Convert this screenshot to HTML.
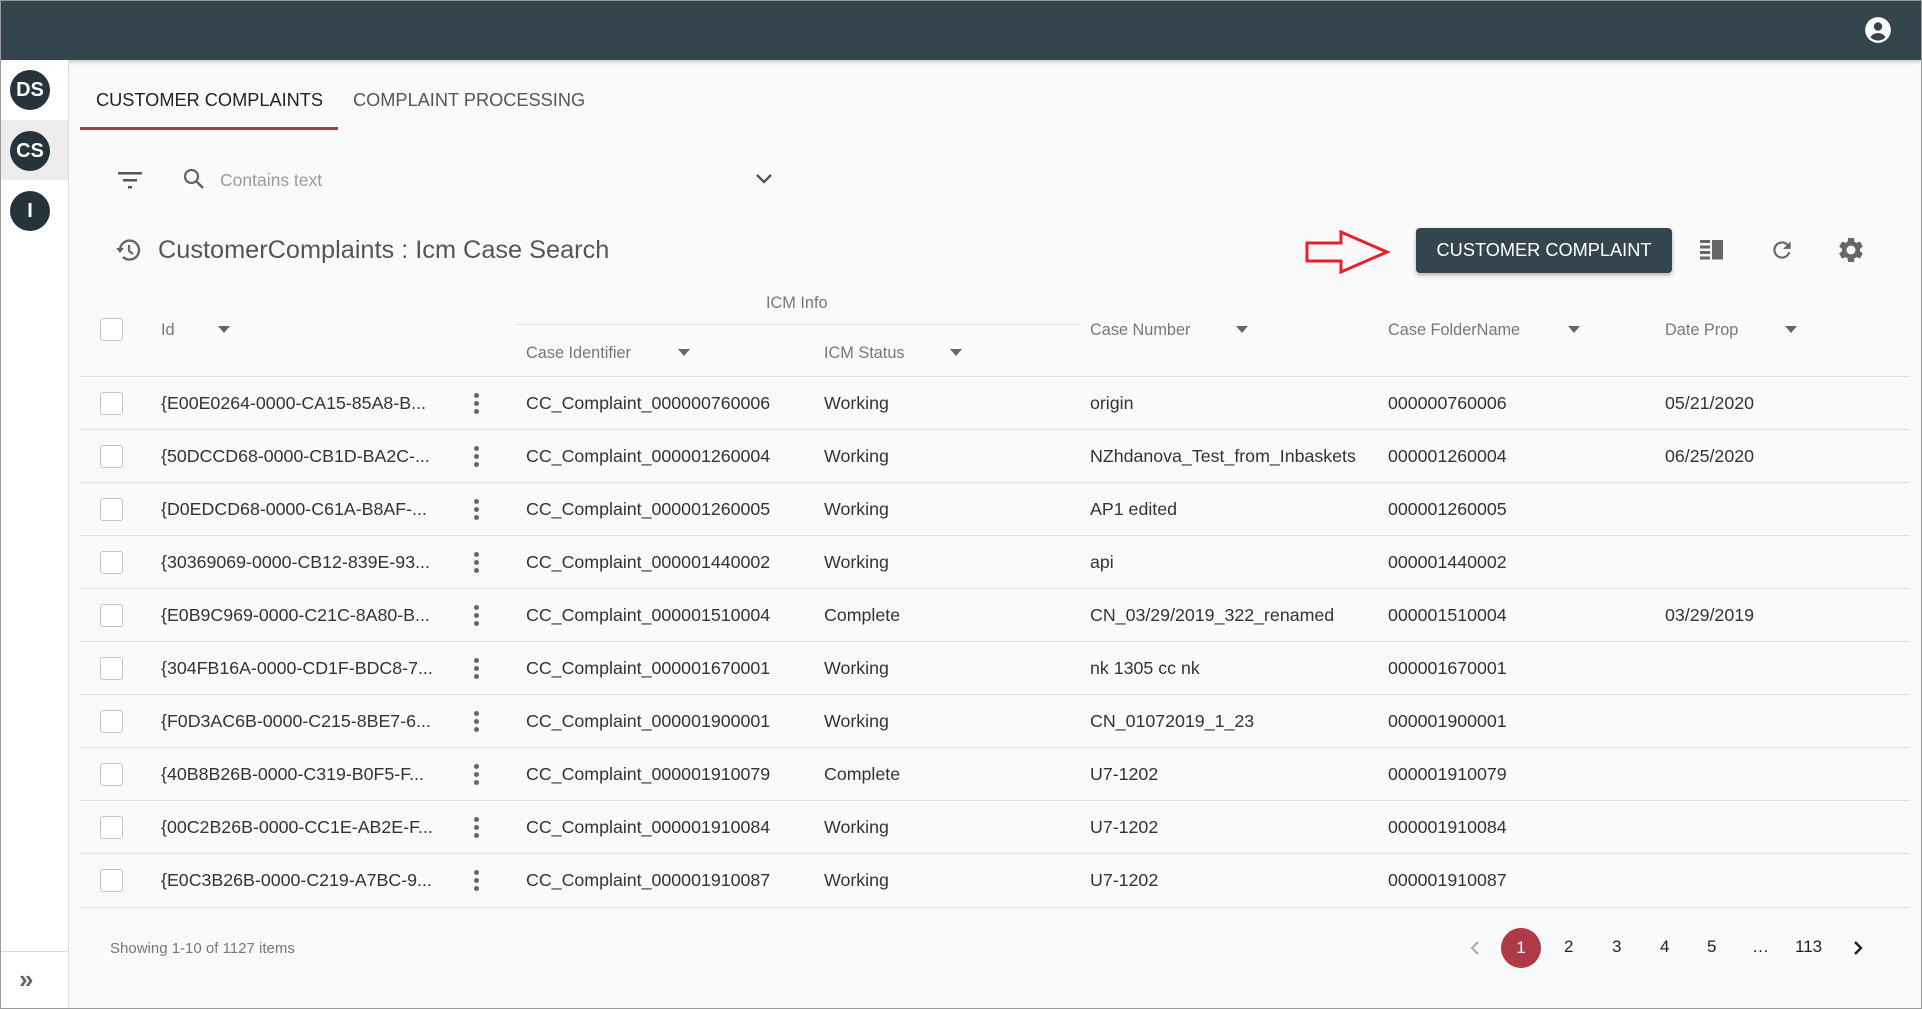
<!DOCTYPE html>
<html><head><meta charset="utf-8"><style>
*{margin:0;padding:0;box-sizing:border-box}
body{width:1922px;height:1009px;overflow:hidden;background:#fafafa;font-family:"Liberation Sans",Arial,sans-serif;position:relative;color:#333}
.a{position:absolute;white-space:nowrap}
.frame{position:absolute;left:0;top:0;width:1922px;height:1009px;border:1px solid #9a9a9a;pointer-events:none;z-index:10}
.hdr{position:absolute;left:0;top:0;width:1922px;height:60px;background:#35454e;box-shadow:0 2px 4px rgba(0,0,0,.2)}
.side{position:absolute;left:0;top:60px;width:69px;height:949px;background:#fff;border-right:1px solid #dcdcdc}
.av{position:absolute;left:10px;width:40px;height:40px;border-radius:50%;background:#26333b;color:#fff;font-weight:bold;font-size:20px;text-align:center;line-height:40px}
.cb{position:absolute;left:100px;width:23px;height:23px;border:1.5px solid #c4c4c4;border-radius:3px;background:#fff}
.hd{position:absolute;color:#777;font-size:16.3px}
.tri{position:absolute;width:0;height:0;border-left:6px solid transparent;border-right:6px solid transparent;border-top:7px solid #666}
.line{position:absolute;height:1px;background:#e0e0e0}
.c{position:absolute;font-size:17.8px;color:#333;white-space:nowrap;margin-top:1px}
.keb{position:absolute;left:474px;width:5px}
.keb i{display:block;width:5px;height:5px;border-radius:50%;background:#666;margin-bottom:3px}
.pg{position:absolute;top:937px;font-size:17px;color:#222}
</style></head><body>
<div class="hdr"></div>
<svg class="a" style="left:1864px;top:16px" width="28" height="28" viewBox="0 0 24 24"><circle cx="12" cy="12" r="11" fill="#fff"/><circle cx="12" cy="9" r="3.6" fill="#35454e"/><path d="M5.5 18.2c1.4-2.4 3.9-3.6 6.5-3.6s5.1 1.2 6.5 3.6c-1.7 1.8-4 2.8-6.5 2.8s-4.8-1-6.5-2.8z" fill="#35454e"/></svg>

<div class="side">
<div style="position:absolute;left:0;top:60px;width:68px;height:60px;background:#ececec"></div>
<div class="av" style="top:10px">DS</div>
<div class="av" style="top:71px">CS</div>
<div class="av" style="top:131px">I</div>
<div style="position:absolute;left:0;top:891px;width:68px;height:1px;background:#dcdcdc"></div>
<div class="a" style="left:19px;top:904px;font-size:26px;color:#666;font-weight:bold;letter-spacing:-4px">»</div>
</div>

<div class="a" style="left:96px;top:90px;font-size:18.2px;color:#222">CUSTOMER COMPLAINTS</div>
<div class="a" style="left:353px;top:90px;font-size:18.2px;color:#555">COMPLAINT PROCESSING</div>
<div class="a" style="left:80px;top:127px;width:258px;height:3px;background:#ae3a42"></div>

<svg class="a" style="left:117px;top:170px" width="26" height="20" viewBox="0 0 26 20"><rect x="1" y="2" width="24" height="2.5" fill="#555"/><rect x="6" y="9" width="14" height="2.5" fill="#555"/><rect x="11" y="16" width="4" height="2.5" fill="#555"/></svg>
<svg class="a" style="left:182px;top:167px" width="24" height="24" viewBox="0 0 24 24"><circle cx="9.5" cy="9.5" r="6.5" fill="none" stroke="#666" stroke-width="2.3"/><path d="M14 14l7 7" stroke="#666" stroke-width="2.6"/></svg>
<div class="a" style="left:220px;top:170px;font-size:17.5px;color:#999">Contains text</div>
<svg class="a" style="left:755px;top:172px" width="18" height="14" viewBox="0 0 18 14"><path d="M2 3l7 7 7-7" fill="none" stroke="#555" stroke-width="2.3"/></svg>

<svg class="a" style="left:115px;top:237px" width="28" height="26" viewBox="0 0 28 26"><path d="M5 13a9.5 9.5 0 1 1 3 7" fill="none" stroke="#666" stroke-width="2.4"/><path d="M1 11l4 5 4-5z" fill="#666"/><path d="M14 8v6l4 3" fill="none" stroke="#666" stroke-width="2.2"/></svg>
<div class="a" style="left:158px;top:236px;font-size:25.3px;color:#555">CustomerComplaints : Icm Case Search</div>

<svg class="a" style="left:1304px;top:229px" width="88" height="46" viewBox="0 0 88 46"><path d="M3 14h34V3l46 20-46 20V32H3z" fill="none" stroke="#e8202a" stroke-width="3"/></svg>
<div class="a" style="left:1416px;top:228px;width:256px;height:45px;background:#35454e;border-radius:4px;color:#fff;font-size:18.2px;text-align:center;line-height:45px;box-shadow:0 2px 4px rgba(0,0,0,.3)">CUSTOMER COMPLAINT</div>
<svg class="a" style="left:1700px;top:240px" width="24" height="20" viewBox="0 0 24 20"><rect x="0" y="0" width="10" height="3" fill="#666"/><rect x="0" y="5.5" width="10" height="3" fill="#666"/><rect x="0" y="11" width="10" height="3" fill="#666"/><rect x="0" y="16.5" width="10" height="3" fill="#666"/><rect x="12" y="0" width="11" height="19.5" fill="#666"/></svg>
<svg class="a" style="left:1769px;top:237px" width="26" height="26" viewBox="0 0 24 24"><path d="M17.65 6.35A7.96 7.96 0 0 0 12 4a8 8 0 1 0 7.730 10h-2.08A6 6 0 1 1 12 6c1.66 0 3.140.69 4.220 1.78L13 11h7V4l-2.350 2.350z" fill="#666"/></svg>
<svg class="a" style="left:1836px;top:235px" width="30" height="30" viewBox="0 0 24 24"><path d="M19.14 12.94c.04-.3.06-.61.06-.94s-.02-.64-.07-.94l2.03-1.58a.5.5 0 0 0 .12-.61l-1.92-3.32a.5.5 0 0 0-.59-.22l-2.39.96a7 7 0 0 0-1.620-.94l-.36-2.54a.48.48 0 0 0-.48-.41h-3.84a.48.48 0 0 0-.47.41l-.36 2.54c-.59.24-1.13.57-1.62.94l-2.39-.96a.49.49 0 0 0-.59.22L2.74 8.87a.49.49 0 0 0 .12.61l2.03 1.58c-.05.3-.09.63-.09.94s.02.64.07.94l-2.03 1.58a.5.5 0 0 0-.12.61l1.92 3.32c.12.22.37.29.59.22l2.39-.96c.5.38 1.03.7 1.62.94l.36 2.54c.05.24.24.41.48.41h3.84c.24 0 .44-.17.47-.41l.36-2.54c.59-.24 1.13-.56 1.62-.94l2.39.96c.22.08.47 0 .59-.22l1.92-3.32a.48.48 0 0 0-.12-.61l-2.01-1.58zM12 15.6A3.6 3.6 0 1 1 12 8.4a3.6 3.6 0 0 1 0 7.2z" fill="#666"/></svg>

<div class="hd" style="left:766px;top:294px">ICM Info</div>
<div class="line" style="left:516px;top:324px;width:563px"></div>
<div class="cb" style="top:318px"></div>
<div class="hd" style="left:161px;top:321px">Id</div><div class="tri" style="left:218px;top:326px"></div>
<div class="hd" style="left:526px;top:344px">Case Identifier</div><div class="tri" style="left:678px;top:349px"></div>
<div class="hd" style="left:824px;top:344px">ICM Status</div><div class="tri" style="left:950px;top:349px"></div>
<div class="hd" style="left:1090px;top:321px">Case Number</div><div class="tri" style="left:1236px;top:326px"></div>
<div class="hd" style="left:1388px;top:321px">Case FolderName</div><div class="tri" style="left:1568px;top:326px"></div>
<div class="hd" style="left:1665px;top:321px">Date Prop</div><div class="tri" style="left:1785px;top:326px"></div>
<div class="line" style="left:80px;top:376px;width:1830px"></div>

<div style="position:absolute;left:0;top:0">
<div class="cb" style="top:392px"></div><div class="c" style="left:161px;top:392px">{E00E0264-0000-CA15-85A8-B...</div><div class="keb" style="top:393px"><i></i><i></i><i></i></div><div class="c" style="left:526px;top:392px">CC_Complaint_000000760006</div><div class="c" style="left:824px;top:392px">Working</div><div class="c" style="left:1090px;top:392px">origin</div><div class="c" style="left:1388px;top:392px">000000760006</div><div class="c" style="left:1665px;top:392px">05/21/2020</div><div class="line" style="left:80px;top:429px;width:1830px"></div>

<div class="cb" style="top:445px"></div><div class="c" style="left:161px;top:445px">{50DCCD68-0000-CB1D-BA2C-...</div><div class="keb" style="top:446px"><i></i><i></i><i></i></div><div class="c" style="left:526px;top:445px">CC_Complaint_000001260004</div><div class="c" style="left:824px;top:445px">Working</div><div class="c" style="left:1090px;top:445px">NZhdanova_Test_from_Inbaskets</div><div class="c" style="left:1388px;top:445px">000001260004</div><div class="c" style="left:1665px;top:445px">06/25/2020</div><div class="line" style="left:80px;top:482px;width:1830px"></div>

<div class="cb" style="top:498px"></div><div class="c" style="left:161px;top:498px">{D0EDCD68-0000-C61A-B8AF-...</div><div class="keb" style="top:499px"><i></i><i></i><i></i></div><div class="c" style="left:526px;top:498px">CC_Complaint_000001260005</div><div class="c" style="left:824px;top:498px">Working</div><div class="c" style="left:1090px;top:498px">AP1 edited</div><div class="c" style="left:1388px;top:498px">000001260005</div><div class="line" style="left:80px;top:535px;width:1830px"></div>

<div class="cb" style="top:551px"></div><div class="c" style="left:161px;top:551px">{30369069-0000-CB12-839E-93...</div><div class="keb" style="top:552px"><i></i><i></i><i></i></div><div class="c" style="left:526px;top:551px">CC_Complaint_000001440002</div><div class="c" style="left:824px;top:551px">Working</div><div class="c" style="left:1090px;top:551px">api</div><div class="c" style="left:1388px;top:551px">000001440002</div><div class="line" style="left:80px;top:588px;width:1830px"></div>

<div class="cb" style="top:604px"></div><div class="c" style="left:161px;top:604px">{E0B9C969-0000-C21C-8A80-B...</div><div class="keb" style="top:605px"><i></i><i></i><i></i></div><div class="c" style="left:526px;top:604px">CC_Complaint_000001510004</div><div class="c" style="left:824px;top:604px">Complete</div><div class="c" style="left:1090px;top:604px">CN_03/29/2019_322_renamed</div><div class="c" style="left:1388px;top:604px">000001510004</div><div class="c" style="left:1665px;top:604px">03/29/2019</div><div class="line" style="left:80px;top:641px;width:1830px"></div>

<div class="cb" style="top:657px"></div><div class="c" style="left:161px;top:657px">{304FB16A-0000-CD1F-BDC8-7...</div><div class="keb" style="top:658px"><i></i><i></i><i></i></div><div class="c" style="left:526px;top:657px">CC_Complaint_000001670001</div><div class="c" style="left:824px;top:657px">Working</div><div class="c" style="left:1090px;top:657px">nk 1305 cc nk</div><div class="c" style="left:1388px;top:657px">000001670001</div><div class="line" style="left:80px;top:694px;width:1830px"></div>

<div class="cb" style="top:710px"></div><div class="c" style="left:161px;top:710px">{F0D3AC6B-0000-C215-8BE7-6...</div><div class="keb" style="top:711px"><i></i><i></i><i></i></div><div class="c" style="left:526px;top:710px">CC_Complaint_000001900001</div><div class="c" style="left:824px;top:710px">Working</div><div class="c" style="left:1090px;top:710px">CN_01072019_1_23</div><div class="c" style="left:1388px;top:710px">000001900001</div><div class="line" style="left:80px;top:747px;width:1830px"></div>

<div class="cb" style="top:763px"></div><div class="c" style="left:161px;top:763px">{40B8B26B-0000-C319-B0F5-F...</div><div class="keb" style="top:764px"><i></i><i></i><i></i></div><div class="c" style="left:526px;top:763px">CC_Complaint_000001910079</div><div class="c" style="left:824px;top:763px">Complete</div><div class="c" style="left:1090px;top:763px">U7-1202</div><div class="c" style="left:1388px;top:763px">000001910079</div><div class="line" style="left:80px;top:800px;width:1830px"></div>

<div class="cb" style="top:816px"></div><div class="c" style="left:161px;top:816px">{00C2B26B-0000-CC1E-AB2E-F...</div><div class="keb" style="top:817px"><i></i><i></i><i></i></div><div class="c" style="left:526px;top:816px">CC_Complaint_000001910084</div><div class="c" style="left:824px;top:816px">Working</div><div class="c" style="left:1090px;top:816px">U7-1202</div><div class="c" style="left:1388px;top:816px">000001910084</div><div class="line" style="left:80px;top:853px;width:1830px"></div>

<div class="cb" style="top:869px"></div><div class="c" style="left:161px;top:869px">{E0C3B26B-0000-C219-A7BC-9...</div><div class="keb" style="top:870px"><i></i><i></i><i></i></div><div class="c" style="left:526px;top:869px">CC_Complaint_000001910087</div><div class="c" style="left:824px;top:869px">Working</div><div class="c" style="left:1090px;top:869px">U7-1202</div><div class="c" style="left:1388px;top:869px">000001910087</div><div class="line" style="left:80px;top:907px;width:1830px"></div>
</div>

<div class="a" style="left:110px;top:940px;font-size:15px;color:#777">Showing 1-10 of 1127 items</div>
<svg class="a" style="left:1469px;top:940px" width="12" height="16" viewBox="0 0 12 16"><path d="M9 2L3 8l6 6" fill="none" stroke="#aaa" stroke-width="2"/></svg>
<div class="a" style="left:1501px;top:928px;width:40px;height:40px;border-radius:50%;background:#ae3a48;color:#fff;font-size:17px;text-align:center;line-height:40px">1</div>
<div class="pg" style="left:1564px">2</div>
<div class="pg" style="left:1612px">3</div>
<div class="pg" style="left:1660px">4</div>
<div class="pg" style="left:1707px">5</div>
<div class="pg" style="left:1752px">…</div>
<div class="pg" style="left:1795px">113</div>
<svg class="a" style="left:1852px;top:940px" width="12" height="16" viewBox="0 0 12 16"><path d="M3 2l6 6-6 6" fill="none" stroke="#222" stroke-width="2.4"/></svg>
<div class="frame"></div>
</body></html>
